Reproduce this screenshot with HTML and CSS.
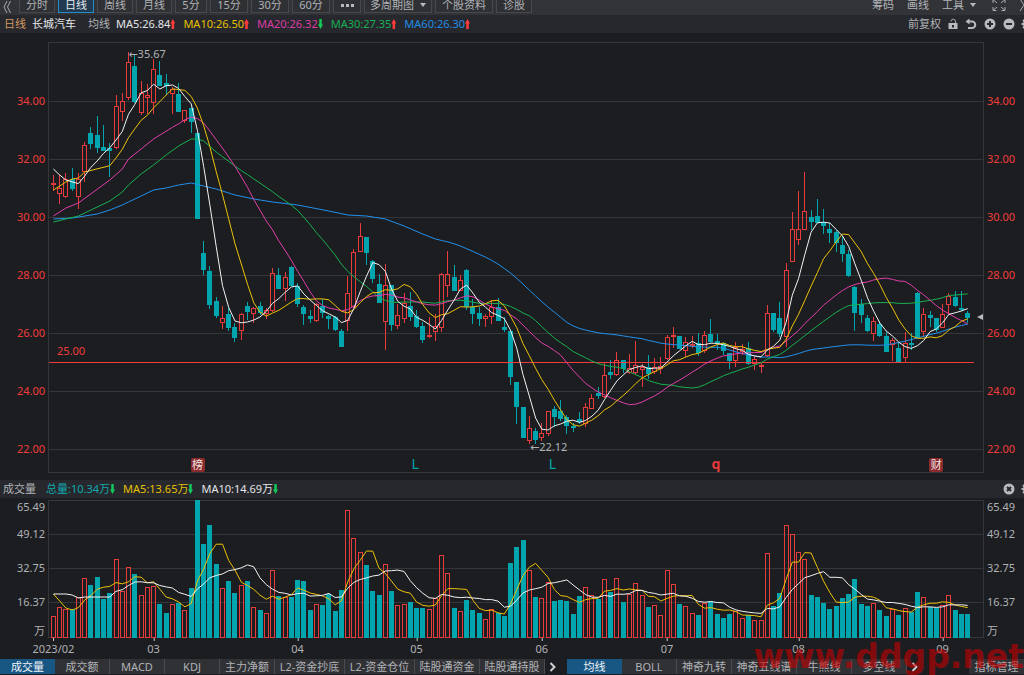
FILE: index.html
```html
<!DOCTYPE html>
<html lang="zh-CN">
<head>
<meta charset="UTF-8">
<meta name="viewport" content="width=device-width, initial-scale=1.0">
<title>长城汽车 日线</title>
<link rel="stylesheet" href="styles.css">
</head>
<body>

<!-- Period toolbar -->
<nav class="toolbar">
  <button class="collapse" aria-label="收起">
    <svg width="8" height="12" viewBox="0 0 8 12"><path d="M4 0 L1 6 L4 12 M7.500 0 L4.500 6 L7.500 12"/></svg>
  </button>
  <div class="periods">
    <button>分时</button>
    <button class="active">日线</button>
    <button>周线</button>
    <button>月线</button>
    <button class="small">5分</button>
    <button class="long">15分</button>
    <button class="long">30分</button>
    <button class="long">60分</button>
    <button class="dots" aria-label="更多"><i></i><i></i><i></i></button>
    <button class="wide">多周期图<i class="caret"></i></button>
    <button class="mid">个股资料</button>
    <button>诊股</button>
  </div>
  <div class="tools">
    <button>筹码</button>
    <button>画线</button>
    <button>工具<i class="caret"></i></button>
    <button aria-label="全屏">
      <svg width="14" height="14" viewBox="0 0 14 14"><path d="M1 5 V1.500 H4.500 M1 1.500 L5 5 M13 5 V1.500 H9.500 M13 1.500 L9 5 M1 9 V12.500 H4.500 M1 12.500 L5 9 M13 9 V12.500 H9.500 M13 12.500 L9 9"/></svg>
    </button>
    <button class="next" aria-label="展开">
      <svg width="8" height="12" viewBox="0 0 8 12"><path d="M1 0 L5 6 L1 12"/></svg>
    </button>
  </div>
</nav>

<!-- Moving average legend -->
<header class="legend">
  <span class="gold">日线</span>
  <span class="name">长城汽车</span>
  <span class="label">均线</span>
  <span class="white">MA5:26.84<b class="up"></b></span>
  <span class="yellow">MA10:26.50<b class="up"></b></span>
  <span class="pink">MA20:26.32<b class="down"></b></span>
  <span class="green">MA30:27.35<b class="up"></b></span>
  <span class="blue">MA60:26.30<b class="up"></b></span>
  <div class="legend-tools">
    <button>前复权</button>
    <button aria-label="锁定">
      <svg width="10" height="12" viewBox="0 0 10 12"><path class="fill" d="M0.500 5 H9.500 V11 H0.500 Z"/><path d="M3 3.500 V3 A2.300 2.300 0 0 1 7.500 3 V5"/><path class="hole" d="M4 7 H6 V9.500 H4 Z"/></svg>
    </button>
    <button aria-label="撤销">
      <svg width="12" height="12" viewBox="0 0 12 12"><path class="bold" d="M2 3.500 H7 A3 3 0 0 1 7 10 H3"/><path class="fill" d="M0.500 3.500 L4.500 0.500 V6.500 Z"/></svg>
    </button>
    <button aria-label="放大">
      <svg width="12" height="12" viewBox="0 0 12 12"><circle class="fill" cx="6" cy="6" r="5.500"/><path class="cut" d="M3 6 H9 M6 3 V9"/></svg>
    </button>
    <button aria-label="缩小">
      <svg width="12" height="12" viewBox="0 0 12 12"><circle class="fill" cx="6" cy="6" r="5.500"/><path class="cut" d="M3 6 H9"/></svg>
    </button>
    <button class="gear" aria-label="设置">
      <svg width="12" height="12" viewBox="0 0 12 12"><circle class="bold" cx="6" cy="6" r="3"/><path class="bold" d="M6 0.500 V3 M6 9 V11.500 M0.500 6 H3 M9 6 H11.500 M2 2 L4 4 M8 8 L10 10 M10 2 L8 4 M4 8 L2 10"/></svg>
    </button>
  </div>
</header>

<main>
  <!-- Candles -->
  <section class="chart price">
    <ul class="axis left">
      <li>34.00</li><li>32.00</li><li>30.00</li><li>28.00</li><li>26.00</li><li>24.00</li><li>22.00</li>
    </ul>
    <div class="plot">
      <svg id="priceChart" viewBox="49 42 934 431" preserveAspectRatio="none"></svg>
      <span class="note high">35.67</span>
      <span class="note low">22.12</span>
      <span class="note support">25.00</span>
      <span class="mark tag rank">榜</span>
      <span class="mark letter l1">L</span>
      <span class="mark letter l2">L</span>
      <span class="mark letter q">q</span>
      <span class="mark tag report">财</span>
      <i class="pointer"></i>
    </div>
    <ul class="axis right">
      <li>34.00</li><li>32.00</li><li>30.00</li><li>28.00</li><li>26.00</li><li>24.00</li><li>22.00</li>
    </ul>
  </section>

  <!-- Volume -->
  <header class="legend volume-legend">
    <span class="label">成交量</span>
    <span class="teal">总量:10.34万<b class="down"></b></span>
    <span class="yellow">MA5:13.65万<b class="down"></b></span>
    <span class="white">MA10:14.69万<b class="down"></b></span>
    <div class="legend-tools">
      <button aria-label="关闭">
        <svg width="12" height="12" viewBox="0 0 12 12"><circle class="fill" cx="6" cy="6" r="5.500"/><path class="cut" d="M4 4 L8 8 M8 4 L4 8"/></svg>
      </button>
      <button class="gear" aria-label="指标设置">
        <svg width="12" height="12" viewBox="0 0 12 12"><circle class="bold" cx="6" cy="6" r="3"/><path class="bold" d="M6 0.500 V3 M6 9 V11.500 M0.500 6 H3 M9 6 H11.500 M2 2 L4 4 M8 8 L10 10 M10 2 L8 4 M4 8 L2 10"/></svg>
      </button>
    </div>
  </header>
  <section class="chart volume">
    <ul class="axis left">
      <li>65.49</li><li>49.12</li><li>32.75</li><li>16.37</li><li>万</li>
    </ul>
    <div class="plot">
      <svg id="volumeChart" viewBox="49 500 934 138" preserveAspectRatio="none"></svg>
    </div>
    <ul class="axis right">
      <li>65.49</li><li>49.12</li><li>32.75</li><li>16.37</li><li>万</li>
    </ul>
  </section>
  <div class="dates" id="dates"></div>
</main>

<!-- Indicator tabs -->
<footer class="tabs">
  <button class="active">成交量</button>
  <button>成交额</button>
  <button>MACD</button>
  <button>KDJ</button>
  <button>主力净额</button>
  <button class="l2">L2-资金抄底</button>
  <button class="l2">L2-资金仓位</button>
  <button class="five">陆股通资金</button>
  <button class="five">陆股通持股</button>
  <button class="more" aria-label="更多指标"><svg width="8" height="10" viewBox="0 0 8 10"><path d="M1.500 1 L5.500 5 L1.500 9"/></svg></button>
  <button class="active second">均线</button>
  <button>BOLL</button>
  <button>神奇九转</button>
  <button class="five">神奇五线谱</button>
  <button>牛熊线</button>
  <button>多空线</button>
  <button class="more" aria-label="更多均线"><svg width="8" height="10" viewBox="0 0 8 10"><path d="M1.500 1 L5.500 5 L1.500 9"/></svg></button>
  <button class="manage">指标管理</button>
</footer>

<div class="watermark">www.ddgp.net</div>

<script src="chart.js"></script>
</body>
</html>
```
FILE: styles.css
```css
* {
  box-sizing: border-box;
}

body {
  margin: 0;
  position: relative;
  overflow-x: hidden;
  background-color: #1c1d20;
  color: #b0b2b6;
  font-family: "Noto Sans", "Noto Sans CJK SC", sans-serif;
  font-size: 11px;
  line-height: 16px;
}

button {
  margin: 0;
  padding: 0;
  border: none;
  background: none;
  color: inherit;
  font: inherit;
  white-space: nowrap;
  cursor: pointer;
}

ul {
  list-style: none;
  margin: 0;
  padding: 0;
}

svg {
  display: block;
  fill: none;
  stroke: #a9abaf;
}

.fill {
  fill: #b8babd;
  stroke: none;
}

.hole {
  fill: #27282d;
  stroke: none;
}

.bold {
  stroke: #b8babd;
  stroke-width: 2;
}

.cut {
  stroke: #27282d;
  stroke-width: 2;
}

/* Toolbar */
.toolbar {
  display: flex;
  align-items: flex-end;
  height: 15px;
  padding: 0 0 2px 3px;
  overflow: hidden;
  background-color: #323337;
}

.collapse {
  width: 16px;
}

.periods {
  display: flex;
  gap: 3px;
}

.periods button {
  width: 36px;
  height: 16px;
  border: 1px solid #47484c;
  background-color: #2f3034;
  line-height: 14px;
}

.periods .active {
  border-color: #2589cc;
  background-color: #203a4f;
  color: #e6eaee;
}

.periods .small {
  width: 32px;
}

.periods .long {
  width: 38px;
}

.periods .dots {
  display: flex;
  align-items: center;
  justify-content: center;
  gap: 2px;
  width: 28px;
}

.dots i {
  width: 3px;
  height: 3px;
  background-color: #b8babd;
}

.periods .wide {
  width: 68px;
}

.periods .mid {
  width: 58px;
}

.caret {
  display: inline-block;
  margin-left: 6px;
  border: 3px solid transparent;
  border-top: 4px solid #b8babd;
  border-bottom: none;
  vertical-align: 2px;
}

.tools {
  display: flex;
  align-items: center;
  gap: 13px;
  height: 16px;
  margin-left: auto;
}

.tools svg {
  margin-left: 3px;
}

.tools .next {
  width: 5px;
  overflow: hidden;
}

.tools .next svg {
  margin-left: 0;
}

/* Legends */
.legend {
  display: flex;
  align-items: center;
  gap: 6px;
  height: 18px;
  padding-left: 4px;
  background-color: #27282d;
}

.legend .label {
  margin-left: 6px;
}

.legend b {
  display: inline-block;
  width: 5px;
  height: 10px;
  margin-right: 2px;
  vertical-align: -1px;
  clip-path: polygon(50% 0, 100% 45%, 75% 45%, 75% 100%, 25% 100%, 25% 45%, 0 45%);
  background-color: #ff3b3b;
}

.legend .down {
  transform: rotate(180deg);
  background-color: #12c85a;
}

.gold { color: #d29a62; }
.name { color: #e4e6e8; }
.white { color: #e4e6e8; }
.yellow { color: #e6c000; }
.pink { color: #dc3ca6; }
.green { color: #18b052; }
.blue { color: #228ce4; }
.teal { color: #10a8ae; }

.legend-tools {
  display: flex;
  align-items: center;
  gap: 6px;
  margin-left: auto;
}

.legend-tools button + button {
  margin-left: 1px;
}

.legend-tools .gear {
  width: 3px;
  margin-left: 0;
  overflow: hidden;
}

.volume-legend {
  margin-top: 7px;
  padding-left: 3px;
}

.volume-legend .label {
  margin: 0 4px 0 0;
}

/* Charts */
.chart {
  display: grid;
  grid-template-columns: 49px 1fr 41px;
}

.price {
  height: 440px;
  padding-top: 9px;
}

.volume {
  height: 140px;
  padding-top: 2px;
}

.plot {
  position: relative;
}

.plot svg {
  width: 100%;
  height: 100%;
  overflow: visible;
}

.axis.left {
  padding-right: 4px;
  text-align: right;
}

.axis.right {
  padding-left: 4px;
}

.price .axis {
  height: 431px;
  padding-top: 30px;
  color: #f03c3c;
}

.price .axis li {
  height: 58px;
  line-height: 58px;
}

.volume .axis li {
  height: 34px;
  line-height: 34px;
}

.volume .axis li:first-child {
  height: 17px;
  line-height: 14px;
}

.volume .axis li:last-child {
  height: 18px;
  line-height: 24px;
}

.frame, .grid { stroke: #34363a; }
.rise { stroke: #e83b3b; }
.fall { stroke: #00a5ad; fill: #00a5ad; }
.wick { fill: none; }
.support-line { stroke: #f03c3c; }

.ma {
  vector-effect: non-scaling-stroke;
  stroke-linejoin: round;
}

.ma5 { stroke: #f2f3f4; }
.ma10 { stroke: #ecc208; }
.ma20 { stroke: #e23eac; }
.ma30 { stroke: #18b050; }
.ma60 { stroke: #2290ec; }

/* Notes over the candles */
.note, .mark, .pointer {
  position: absolute;
}

.note.high {
  left: 8.5%;
  top: 1%;
}

.note.low {
  left: 51.5%;
  top: 92%;
}

.note.high::before, .note.low::before {
  content: "←";
  font-family: "DejaVu Sans", sans-serif;
}

.note.support {
  left: 8px;
  top: 70%;
  margin-top: -1px;
  color: #f03c3c;
}

.mark {
  bottom: 1px;
  width: 14px;
  margin-left: -7px;
  line-height: 14px;
  text-align: center;
}

.tag {
  border-radius: 2px;
  background-color: #8c2b2e;
  color: #f0e4e4;
}

.letter {
  bottom: 2px;
  color: #00a5ad;
  font-size: 14px;
}

.rank { left: 15.9%; }
.l1 { left: 39.2%; }
.l2 { left: 53.9%; }
.report { left: 95%; }

.q {
  left: 71.4%;
  color: #e23a3a;
  font-weight: bold;
}

.pointer {
  right: 0;
  top: 63%;
  border: 3px solid transparent;
  border-left: none;
  border-right: 6px solid #b8babd;
}

/* Dates */
.dates {
  position: relative;
  height: 20px;
  margin: 0 41px 0 49px;
}

.dates span {
  position: absolute;
  top: 3px;
  transform: translateX(-50%);
}

.dates span::before {
  content: "";
  position: absolute;
  left: 50%;
  top: -3px;
  width: 1px;
  height: 3px;
  background-color: #c8cacc;
}

/* Bottom tabs */
.tabs {
  display: flex;
  height: 17px;
  padding-top: 1px;
  border-bottom: 1px solid #1c1d20;
}

.tabs button {
  flex: none;
  width: 55px;
  border-right: 1px solid #4a4b4f;
  background-color: #303135;
  line-height: 15px;
}

.tabs .active {
  border-right: none;
  background-color: #185784;
  color: #f0f4f8;
}

.tabs .l2 {
  width: 70px;
}

.tabs .five {
  width: 65px;
}

.tabs .more {
  display: flex;
  align-items: center;
  justify-content: center;
  width: 16px;
  border: none;
  background: none;
}

.more path {
  stroke: #d0d2d4;
  stroke-width: 2;
}

.tabs .second {
  margin-left: 6px;
}

.tabs .manage {
  margin-left: auto;
  border: none;
}

.watermark {
  position: absolute;
  right: 0;
  bottom: 0;
  color: rgba(200, 0, 0, 0.62);
  font-family: "DejaVu Sans", sans-serif;
  font-size: 33px;
  font-weight: bold;
  line-height: 36px;
  pointer-events: none;
}
```
FILE: chart.js
```js
const START = 53.4;
const STEP = 6.262;

// One row per day: r = rise, f = fall, then high, body top, body bottom, low, volume top (chart units)
const days = `
r 175 183 184 191 616|r 174 188 194 204 607|r 173 179 197 198 609|f 168 179 189 191 609|r 173 179 197 209 597
r 142 145 172 182 578|f 127 133 144 149 585|f 116 135 148 153 577|f 125 147 151 151 599|f 143 148 151 177 593
r 95 106 148 149 559|r 93 101 112 121 591|r 52 62 98 100 567|f 55 66 102 103 574|r 81 93 113 115 595
r 84 95 98 114 587|r 59 69 103 114 586|f 61 75 86 86 604|f 74 83 86 95 613|r 87 89 94 114 604
f 83 94 112 112 603|r 110 110 121 123 610|f 107 108 122 133 588|f 133 133 219 219 500|f 241 253 270 275 544
f 266 271 305 309 525|f 297 301 316 318 564|r 306 318 323 329 588|f 308 314 328 331 581|f 323 327 338 342 593
r 313 314 331 340 585|f 302 306 312 320 581|r 307 308 314 323 607|f 302 306 313 315 610|r 308 310 314 319 613
r 268 273 311 312 570|f 268 275 289 289 596|r 272 277 289 301 597|f 266 267 286 287 597|f 283 286 304 307 580
f 305 307 314 325 581|f 310 316 319 323 610|r 303 304 321 322 604|f 299 306 313 318 605|f 315 316 319 329 594
f 316 317 330 331 611|f 329 331 347 347 590|r 276 293 321 331 510|r 249 252 307 308 538|r 223 236 252 252 552
f 237 237 253 265 565|f 260 261 279 283 591|f 274 284 303 303 595|r 264 285 322 350 564|f 285 285 325 331 591
r 304 315 326 329 605|r 293 303 319 323 604|f 292 306 317 321 602|f 310 316 327 328 608|f 322 326 340 343 608
r 317 335 337 338 609|r 314 326 332 341 598|r 273 274 328 332 555|r 251 274 286 297 573|f 265 277 291 291 608
r 275 280 291 291 611|f 269 270 307 310 600|f 299 307 314 324 610|f 307 313 319 326 613|r 314 316 319 327 619
r 300 307 317 324 609|f 298 307 321 321 613|f 317 327 330 332 616|f 330 331 377 385 563|f 382 382 407 424 547
f 407 407 438 438 540|r 416 428 441 444 570|f 428 431 440 444 597|r 423 433 438 441 598|r 411 411 434 436 582
f 406 409 417 427 601|f 400 411 419 421 600|f 415 417 426 434 601|f 423 426 428 432 614|f 412 419 422 424 596
r 403 407 424 427 587|r 394 398 409 409 595|f 387 393 396 399 599|r 363 375 397 398 579|f 360 372 375 379 592
r 352 360 375 376 578|f 360 360 369 373 602|r 354 368 373 374 594|r 341 365 373 375 583|r 364 367 370 387 595
f 355 367 374 379 607|r 358 367 372 374 605|r 357 366 369 374 615|r 335 337 359 360 570|r 327 335 336 348 584
f 336 336 349 349 604|r 337 342 351 357 606|r 336 344 345 348 613|f 333 343 353 356 615|r 331 335 351 353 603
f 319 334 342 343 601|f 334 341 343 350 614|f 342 343 351 355 618|f 353 353 361 369 614|r 342 347 361 367 611
r 344 349 352 355 618|f 342 348 364 365 615|r 356 359 364 370 620|r 363 365 367 373 620|r 305 313 356 357 553
f 313 313 330 332 606|f 302 318 334 337 593|r 263 270 337 347 525|r 212 229 262 262 534|r 191 229 240 245 552
r 172 211 230 230 559|f 210 217 222 230 595|f 199 216 223 223 597|f 209 222 226 234 603|f 223 229 233 243 609
f 230 232 243 252 606|f 236 245 254 262 598|f 250 254 276 277 594|f 286 287 313 331 579|f 299 304 315 323 604
f 315 318 331 332 606|r 317 321 334 341 603|f 321 324 336 337 610|f 332 336 352 352 616|r 338 340 345 361 609
f 342 348 362 362 615|r 332 343 358 362 608|f 333 343 345 350 612|f 292 293 338 338 592|r 308 314 332 337 597
f 311 315 318 327 607|f 318 318 330 332 608|r 304 314 328 328 605|r 293 296 305 315 595|f 291 297 306 307 610
f 291 308 309 311 614|f 311 313 318 323 614
`.trim().split(/[|\n]/).map(row => {
  const [kind, high, top, bottom, low, volume] = row.split(' ');
  return { rise: kind === 'r', high: +high, top: +top, bottom: +bottom, low: +low, volume: +volume };
});

const months = [[0, '2023/02'], [16, '03'], [39, '04'], [58, '05'], [78, '06'], [98, '07'], [119, '08'], [142, '09']];

// Start of each average, before there are enough days to compute it: [day, y]
const priceLeads = {
  60: [[0, 219], [3, 218], [4, 217], [7, 214], [9, 210], [11, 205], [12, 202], [14, 196], [16, 190], [18, 188], [20, 185], [22, 183], [24, 186], [26, 189], [29, 195], [32, 199], [35, 202], [39, 205], [44, 211], [47, 215], [50, 216], [53, 219], [56, 226], [59, 234]],
  30: [[0, 222], [2, 219], [4, 216], [9, 201], [11, 192], [12, 185], [14, 174], [16, 165], [18, 155], [20, 146], [22, 139], [23, 139], [24, 141], [26, 152], [29, 165]],
  20: [[0, 216], [2, 208], [4, 203], [9, 180], [11, 169], [12, 159], [14, 149], [16, 139], [19, 128]],
  10: [[0, 190], [1, 186], [2, 182], [3, 179], [4, 178], [5, 172], [9, 166]],
  5: [[0, 169], [1, 175], [2, 180], [4, 184]]
};
const volumeLeads = {
  10: [[0, 594], [2, 594], [3, 595], [4, 598], [5, 597], [9, 597]],
  5: [[0, 594], [1, 601], [2, 608], [3, 610], [4, 608]]
};

const dayX = i => START + i * STEP;

function line(cls, x1, y1, x2, y2) {
  return `<line class="${cls}" x1="${x1}" y1="${y1}" x2="${x2}" y2="${y2}"/>`;
}

function average(values, n, lead) {
  const points = lead.filter(p => p[0] < n - 1).map(p => [dayX(p[0]), p[1]]);
  for (let i = n - 1; i < values.length; i++) {
    const sum = values.slice(i - n + 1, i + 1).reduce((a, b) => a + b, 0);
    points.push([dayX(i), sum / n]);
  }
  return `<polyline class="ma ma${n}" points="${points.map(p => p[0].toFixed(1) + ',' + p[1].toFixed(1)).join(' ')}"/>`;
}

function body(rise, left, top, bottom) {
  const h = Math.max(bottom - top, 1);
  return `<rect class="${rise ? 'rise' : 'fall'}" x="${left + 0.5}" y="${top + 0.5}" width="4" height="${h}"/>`;
}

function drawPrice() {
  let out = '<rect class="frame" x="48.5" y="42.5" width="935" height="430"/>';
  for (let y = 101.5; y < 460; y += 58) out += line('grid', 49, y, 983, y);
  days.forEach((d, i) => {
    const left = Math.floor(dayX(i)) - 2;
    const mid = left + 2.5;
    const cls = d.rise ? 'rise wick' : 'fall wick';
    out += line(cls, mid, d.high, mid, d.top) + line(cls, mid, d.bottom, mid, d.low);
    out += body(d.rise, left, d.top, d.bottom - 1);
  });
  out += line('support-line', 49, 362.5, 974, 362.5);
  const closes = days.map(d => d.rise ? d.top : d.bottom);
  [60, 30, 20, 10, 5].forEach(n => out += average(closes, n, priceLeads[n]));
  document.getElementById('priceChart').innerHTML = out;
}

function drawVolume() {
  let out = '<rect class="frame" x="48.5" y="500.5" width="935" height="137"/>';
  [534.5, 568.5, 602.5].forEach(y => out += line('grid', 49, y, 983, y));
  days.forEach((d, i) => out += body(d.rise, Math.floor(dayX(i)) - 2, d.volume, 637));
  const tops = days.map(d => d.volume);
  [5, 10].forEach(n => out += average(tops, n, volumeLeads[n]).replace(`ma${n}`, n === 5 ? 'ma10' : 'ma5'));
  document.getElementById('volumeChart').innerHTML = out;
}

function drawDates() {
  const dates = document.getElementById('dates');
  months.forEach(([i, text]) => {
    const label = document.createElement('span');
    label.textContent = text;
    label.style.left = ((dayX(i) - 49) / 934 * 100) + '%';
    dates.appendChild(label);
  });
}

drawPrice();
drawVolume();
drawDates();
```
